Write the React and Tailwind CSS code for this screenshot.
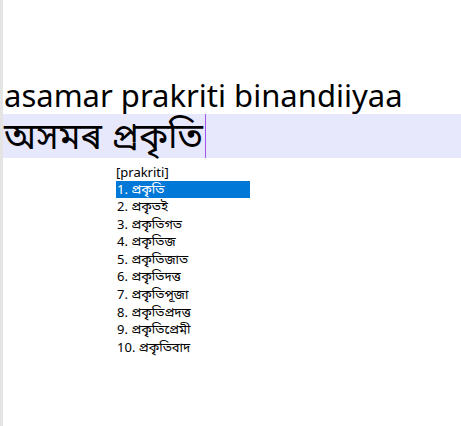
import React from "react";

const suggestions = [
  "প্ৰকৃতি",
  "প্ৰকৃতই",
  "প্ৰকৃতিগত",
  "প্ৰকৃতিজ",
  "প্ৰকৃতিজাত",
  "প্ৰকৃতিদত্ত",
  "প্ৰকৃতিপূজা",
  "প্ৰকৃতিপ্ৰদত্ত",
  "প্ৰকৃতিপ্ৰেমী",
  "প্ৰকৃতিবাদ",
];

const font = {
  fontFamily:
    '"Noto Sans", "Noto Sans Bengali", "Lohit Assamese", "Lohit Bengali", "FreeSans", sans-serif',
};

export default function App() {
  return (
    <div className="flex min-h-[426px] bg-white text-black" style={font}>
      {/* left edge */}
      <div className="w-[3px] shrink-0 bg-[#e4e4e4]" />

      <div className="flex-1 pt-[76px]">
        {/* transliterated input */}
        <div className="pl-px text-[31px] leading-[38px]">
          asamar prakriti binandiiyaa
        </div>

        {/* converted line with caret */}
        <div className="flex h-[44px] items-stretch bg-[#e8e8fc]">
          <span className="pl-px text-[36px] leading-[44px]">অসমৰ প্ৰকৃতি</span>
          <span className="ml-[2px] w-px bg-[#a352f0]" />
        </div>

        {/* suggestion list */}
        <div className="ml-[113px] mt-[6px] w-[134px] text-[13px]">
          <div className="leading-[17px]">[prakriti]</div>
          <ul>
            {suggestions.map((word, i) => (
              <li
                key={i}
                className={
                  i === 0
                    ? "h-[17px] bg-[#0078d7] pl-px leading-[17px] text-white"
                    : "h-[17.6px] pl-px leading-[17.6px]"
                }
              >
                {i + 1}. {word}
              </li>
            ))}
          </ul>
        </div>
      </div>
    </div>
  );
}
